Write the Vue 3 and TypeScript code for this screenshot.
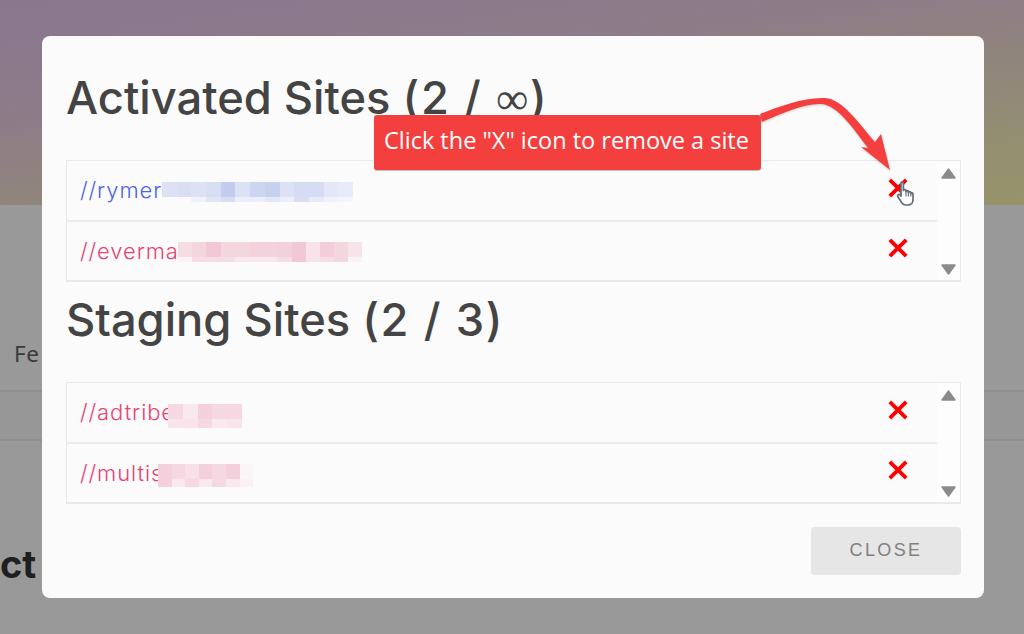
<script setup lang="ts">
interface Site { text: string; redact: string[][]; heights: number[]; cell: number; tone: string; offset: number }
const blue = [
  ['#dde1f6','#d9def5','#dde1f6','#d8ddf4','#c2ccee','#dde1f6','#ccd5f1','#c6d1f0','#dde1f6','#d6dcf4','#d6dcf4','#e4e7f8','#e8ebf9'],
  ['#fbfbfb','#fbfbfb','#f0f1fa','#e2e5f7','#d8ddf4','#eceefa','#eceefa','#e4e7f8','#eceefa','#d8ddf4','#e8eaf8','#f0f1fa','#f4f5fb'],
]
const pink = [
  ['#f6dde4','#f4d6df','#f2c8d6','#f4d6df','#f4d6df','#f4d2dd','#f4d2dd','#f2d0dc','#f1c9d6','#f7e3e9','#f2cedb','#f4d6df','#f7e3e9'],
  ['#fbf2f4','#f6dde4','#f6dde4','#f6dde4','#f8e8ec','#f8e8ec','#f8e8ec','#f6dde4','#f1c9d6','#f7e3e9','#f6dde4','#f4d6df','#fbf2f4'],
]
const pinkA = [
  ['#f5d8e1','#f9e8ed','#f3d0dc','#f5d8e1','#f5d8e1'],
  ['#f8e4ea','#f8e4ea','#f5d8e1','#f9e8ed','#f8e4ea'],
]
const pinkB = [
  ['#f3d0dc','#f5d8e1','#f7e0e7','#f3d0dc','#f5d8e1','#f3d0dc','#fbf5f7'],
  ['#f3d0dc','#f9e8ed','#f5d8e1','#f9e8ed','#f5d8e1','#f9e8ed','#fbf0f3'],
]
const groups: { title: string; count: string; limit: string; sites: Site[] }[] = [
  {
    title: 'Activated Sites',
    count: '(2 / ',
    limit: '∞',
    sites: [
      { text: '//rymer', redact: blue, heights: [15, 5], cell: 14.7, tone: 'blue', offset: 162 - 80 },
      { text: '//everma', redact: pink, heights: [15, 5], cell: 14.2, tone: 'pink', offset: 178 - 80 },
    ],
  },
  {
    title: 'Staging Sites',
    count: '(2 / 3',
    limit: '',
    sites: [
      { text: '//adtribe', redact: pinkA, heights: [15, 9], cell: 14.8, tone: 'pink', offset: 168 - 80 },
      { text: '//multis', redact: pinkB, heights: [15, 8], cell: 13.6, tone: 'pink', offset: 158 - 80 },
    ],
  },
]
</script>

<template>
  <div class="page">
    <div class="hero"></div>
    <div class="behind">
      <div class="fe">Fe</div>
      <div class="band"></div>
      <div class="ct">ct</div>
    </div>

    <div class="modal">
      <section v-for="(g, gi) in groups" :key="gi" class="group">
        <h2 class="title">{{ g.title }} <span class="count">{{ g.count }}<span v-if="g.limit" class="limit">{{ g.limit }}</span>)</span></h2>
        <div class="list">
          <div class="rows">
            <div v-for="s in g.sites" :key="s.text" class="row" :class="s.tone">
              <span class="site">{{ s.text }}</span>
              <span class="redact" :style="{ left: s.offset + 'px' }">
                <span v-for="(line, li) in s.redact" :key="li" class="redact-line">
                  <i
                    v-for="(col, ci) in line"
                    :key="ci"
                    :style="{ background: col, width: s.cell + 'px', height: s.heights[li] + 'px' }"
                  ></i>
                </span>
              </span>
              <svg class="x" viewBox="0 0 20 20" width="20" height="20">
                <path d="M1.8 1.8 18.2 18.2M18.2 1.8 1.8 18.2" stroke="#ff0000" stroke-width="3.8" fill="none" />
              </svg>
            </div>
          </div>
          <div class="scroll">
            <svg viewBox="0 0 15 11" width="15" height="11"><path d="M7.5 1 14 10H1Z" fill="#8a8a8a" stroke="#8a8a8a" stroke-width="1.4" stroke-linejoin="round" /></svg>
            <svg viewBox="0 0 15 11" width="15" height="11"><path d="M1 1H14L7.5 10Z" fill="#8a8a8a" stroke="#8a8a8a" stroke-width="1.4" stroke-linejoin="round" /></svg>
          </div>
        </div>
      </section>
      <div class="foot">
        <button class="close" type="button">CLOSE</button>
      </div>
    </div>

    <svg class="arrow" viewBox="0 0 1024 634" width="1024" height="634">
      <path d="M760 114C780 106 805 97 825 98C842 99 858 122 875 142L881 134L890 170L861 147L868 148C853 128 838 106 822 104C805 103 785 112 762 122Z" fill="#f43f3f" />
    </svg>

    <div class="tip">Click the "X" icon to remove a site</div>

    <svg class="hand" viewBox="0 0 20 26" width="20" height="26">
      <path d="M5 2.2C5 .8 7.4.8 7.4 2.2V9.5C7.4 8.3 10 8.3 10 9.5V10.5C10 9.4 12.4 9.4 12.4 10.7V11.5C12.4 10.4 14.8 10.4 14.8 11.8V12.6C14.8 11.6 17 11.6 17 13V18.5C17 21.5 15.2 24 12 24H9.5C7.5 24 6.4 23 5.4 21.2L1.8 15.5C1 14 3 12.8 4.2 14L5 15.2Z" fill="#fdfdfd" stroke="#646b79" stroke-width="1.7" stroke-linejoin="round" />
      <path d="M10 10V15.5M12.4 11V15.5M14.8 12V15.5" stroke="#646b79" stroke-width="1.1" fill="none" />
    </svg>
  </div>
</template>

<style>
html, body { margin: 0; padding: 0; background: #999; }
</style>

<style scoped>
.page {
  position: relative;
  width: 1024px;
  height: 634px;
  overflow: hidden;
  background: #999999;
  font-family: "Inter", "Liberation Sans", sans-serif;
}
.hero {
  height: 205px;
  background: linear-gradient(172deg, #89778f 0%, #8d7c88 35%, #94906f 85%, #97946a 100%);
}
.fe {
  padding: 135px 0 0 14px;
  font-family: "Noto Sans", sans-serif;
  font-size: 22.5px;
  line-height: 28px;
  letter-spacing: .5px;
  color: #3a3a3a;
}
.band {
  margin-top: 22px;
  height: 47px;
  background: #979797;
  border-top: 2px solid #8f8f8f;
  border-bottom: 2px solid #8f8f8f;
}
.ct {
  margin-top: 100px;
  font-weight: 700;
  font-size: 38px;
  line-height: 46px;
  color: #1f1f1f;
}
.modal {
  position: absolute;
  left: 42px;
  top: 36px;
  width: 942px;
  height: 562px;
  box-sizing: border-box;
  padding: 24px 23px 23px 24px;
  background: #fbfbfb;
  border-radius: 8px;
  display: flex;
  flex-direction: column;
}
.title {
  margin: 0 0 17px;
  height: 83px;
  box-sizing: border-box;
  padding-top: 6px;
  font-weight: 550;
  font-size: 45.3px;
  line-height: 64px;
  white-space: pre;
  color: #444444;
}
.count { letter-spacing: 1.6px; }
.limit {
  font-family: "Liberation Serif", serif;
  font-weight: 400;
}
.list {
  width: 895px;
  height: 122px;
  box-sizing: border-box;
  border: 1px solid #e9e9e9;
  border-bottom-width: 2px;
  display: flex;
}
.rows { flex: 1; min-width: 0; }
.row {
  height: 59px;
  box-sizing: border-box;
  display: flex;
  align-items: center;
  padding-left: 13px;
  padding-right: 29px;
  position: relative;
  font-size: 22px;
  font-weight: 300;
  letter-spacing: .9px;
}
.row:first-child { height: 61px; border-bottom: 2px solid #ececec; }
.row.blue { color: #4e64e6; }
.row.pink { color: #ec3f74; }
.site { white-space: nowrap; margin-top: -2px; }
.redact {
  position: absolute;
  top: 21px;
  display: flex;
  flex-direction: column;
  margin-left: 13px;
}
.row + .row .redact { top: 20px; }
.redact-line { display: flex; }
.redact-line i { display: block; }
.x { margin-left: auto; margin-top: -6px; }
.row + .row .x { margin-top: -8px; }
.scroll {
  width: 23px;
  background: #fdfdfd;
  display: flex;
  flex-direction: column;
  align-items: center;
  justify-content: space-between;
  padding: 7px 0 5px;
  box-sizing: border-box;
}
.foot {
  margin-top: auto;
  display: flex;
  justify-content: flex-end;
}
.close {
  width: 150px;
  height: 48px;
  padding: 0 0 2px;
  border: 0;
  border-radius: 4px;
  background: #e6e6e6;
  color: #808080;
  font-family: "Liberation Sans", sans-serif;
  font-size: 18px;
  letter-spacing: 2.4px;
}
.arrow {
  position: absolute;
  left: 0;
  top: 0;
  pointer-events: none;
  filter: drop-shadow(0 1px 1px rgba(0, 0, 0, .18));
}
.tip {
  position: absolute;
  left: 374px;
  top: 115px;
  width: 387px;
  height: 55px;
  box-sizing: border-box;
  padding-left: 10px;
  border-radius: 3px;
  background: #f43f3f;
  color: #ffffff;
  font-family: "Open Sans", sans-serif;
  font-size: 23.5px;
  line-height: 50px;
  white-space: nowrap;
  box-shadow: 0 1px 1px rgba(0, 0, 0, .25);
}
.hand { position: absolute; left: 896px; top: 181px; }
</style>
